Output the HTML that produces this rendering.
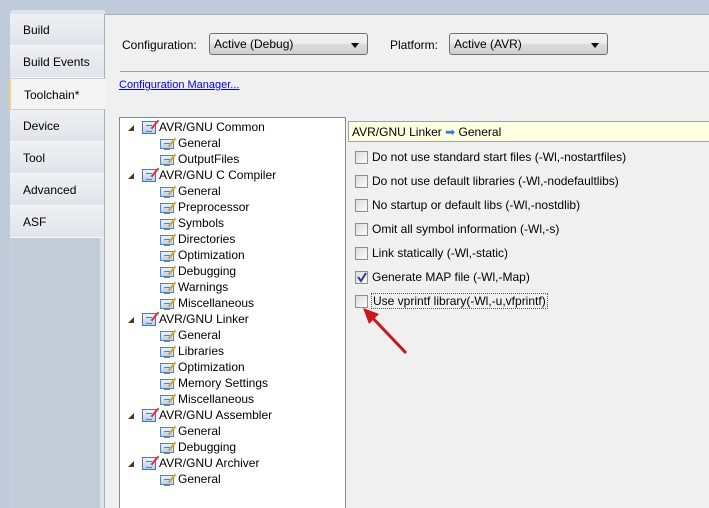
<!DOCTYPE html>
<html style="overflow:hidden;width:709px;height:508px"><head><style>
*{margin:0;padding:0;box-sizing:border-box}
body{width:709px;height:508px;overflow:hidden;background:#bfcadb;font-family:"Liberation Sans",sans-serif;font-size:12px;color:#000;position:relative}
.strip{position:absolute;left:10px;top:10px;width:95px;height:498px;background:#dfe3ea;border-top-left-radius:4px}
.strip2{position:absolute;left:10px;top:238px;width:90px;height:270px;background:#c3cdda}
.tab{position:absolute;left:10px;width:95px;height:32px;padding:9px 0 0 13px;background:linear-gradient(#eef0f3,#e1e5ea);border-bottom:1px solid #f7f8fa}
.sel{background:#f4f4f4;border-left:2px solid #f5cf7a;border-top:1px solid #c8cfd8;border-bottom:1px solid #c8cfd8;left:9px;width:97px;z-index:2}
.main{position:absolute;left:104px;top:14px;right:0;bottom:0;background:#f0f0f0;border-left:1px solid #a7afba;border-top:1px solid #a7afba}
.abs{position:absolute}
.dd{position:absolute;height:22px;border:1px solid #707070;border-radius:3px;background:linear-gradient(#f2f2f2,#ebebeb 50%,#dcdcdc 51%,#cfcfcf);padding:3px 0 0 4px}
.dd:after{content:"";position:absolute;right:8px;top:9px;border:4px solid transparent;border-top:5px solid #000;border-bottom:0}
.tree{position:absolute;left:119px;top:117px;width:227px;height:395px;background:#fff;border:1px solid #828790}
.r{position:absolute;height:16px;white-space:nowrap}
.tri{position:absolute;width:0;height:0;border-left:6px solid transparent;border-bottom:6px solid #3c3c3c}
.ic{position:absolute;width:14px;height:13px;border:1px solid #4a78b0;background:linear-gradient(#eaf2fb,#b8d0ea)}
.ic:after{content:"";position:absolute;left:3px;top:3px;width:6px;height:5px;border-top:1px solid #5b7fa8;border-bottom:1px solid #5b7fa8}
.pen{position:absolute;width:2px;height:11px;background:#e0302a;transform:rotate(40deg)}
.pen2{background:#d9a520}
.hdr{position:absolute;left:348px;top:121px;width:370px;height:21px;background:#ffffe1;border:1px solid #a0a0a0;padding:3px 0 0 3px}
.cb{position:absolute;left:355px;width:13px;height:13px;border:1px solid #8e8f8f;background:linear-gradient(135deg,#dcdcdc,#fbfbfb)}
.cl{position:absolute;left:372px}
</style></head><body>
<div class="strip"></div><div class="strip2"></div>
<div class="tab" style="top:14px">Build</div>
<div class="tab" style="top:46px">Build Events</div>
<div class="tab" style="top:110px">Device</div>
<div class="tab" style="top:142px">Tool</div>
<div class="tab" style="top:174px">Advanced</div>
<div class="tab" style="top:206px">ASF</div>
<div class="main"></div>
<div class="tab sel" style="top:78px">Toolchain*</div>
<div class="abs" style="left:122px;top:38px">Configuration:</div>
<div class="dd" style="left:209px;top:33px;width:159px">Active (Debug)</div>
<div class="abs" style="left:390px;top:38px">Platform:</div>
<div class="dd" style="left:449px;top:33px;width:159px">Active (AVR)</div>
<div class="abs" style="left:120px;top:71px;right:0;border-top:1px solid #a0a0a0;height:1px"></div>
<div class="abs" style="left:119px;top:79px;color:#0000ee;text-decoration:underline;font-size:11px">Configuration Manager...</div>
<div class="tree"></div>
<div id="t"></div>
<div class="hdr">AVR/GNU Linker <span style="color:#2a7fd4">&#x27A1;</span> General</div>
<div class="cb" style="top:151px"></div><div class="cl" style="top:150px">Do not use standard start files (-Wl,-nostartfiles)</div>
<div class="cb" style="top:175px"></div><div class="cl" style="top:174px">Do not use default libraries (-Wl,-nodefaultlibs)</div>
<div class="cb" style="top:199px"></div><div class="cl" style="top:198px">No startup or default libs (-Wl,-nostdlib)</div>
<div class="cb" style="top:223px"></div><div class="cl" style="top:222px">Omit all symbol information (-Wl,-s)</div>
<div class="cb" style="top:247px"></div><div class="cl" style="top:246px">Link statically (-Wl,-static)</div>
<div class="cb" style="top:271px"><svg width="11" height="11" style="position:absolute;left:0;top:0"><path d="M2 5 L5 9 L10 1" stroke="#2b3a8c" stroke-width="2" fill="none"/></svg></div><div class="cl" style="top:270px">Generate MAP file (-Wl,-Map)</div>
<div class="cb" style="top:295px"></div><div class="cl" style="top:294px;outline:1px dotted #555;padding:0 1px">Use vprintf library(-Wl,-u,vfprintf)</div>
<svg class="abs" style="left:360px;top:305px" width="50" height="52"><line x1="46" y1="48" x2="8" y2="8" stroke="#c8171d" stroke-width="3"/><path d="M3 3 L19 9 L9 19 Z" fill="#c8171d"/></svg>
<script>
var items=[[0,"AVR/GNU Common"],[1,"General"],[1,"OutputFiles"],[0,"AVR/GNU C Compiler"],[1,"General"],[1,"Preprocessor"],[1,"Symbols"],[1,"Directories"],[1,"Optimization"],[1,"Debugging"],[1,"Warnings"],[1,"Miscellaneous"],[0,"AVR/GNU Linker"],[1,"General"],[1,"Libraries"],[1,"Optimization"],[1,"Memory Settings"],[1,"Miscellaneous"],[0,"AVR/GNU Assembler"],[1,"General"],[1,"Debugging"],[0,"AVR/GNU Archiver"],[1,"General"]];
var h="";items.forEach(function(it,i){var y=120+i*16;
if(it[0]==0){h+='<div class="tri" style="left:128px;top:'+(y+5)+'px"></div><div class="ic" style="left:142px;top:'+(y+1)+'px"></div><div class="pen" style="left:154px;top:'+(y-1)+'px"></div><div class="r" style="left:159px;top:'+y+'px">'+it[1]+'</div>';}
else{h+='<div class="ic" style="left:160px;top:'+(y+3)+'px;height:10px;border-color:#5a82b8"></div><div class="pen pen2" style="left:171px;top:'+(y+1)+'px"></div><div class="r" style="left:178px;top:'+y+'px">'+it[1]+'</div>';}
});document.getElementById("t").innerHTML=h;
</script>
</body></html>
